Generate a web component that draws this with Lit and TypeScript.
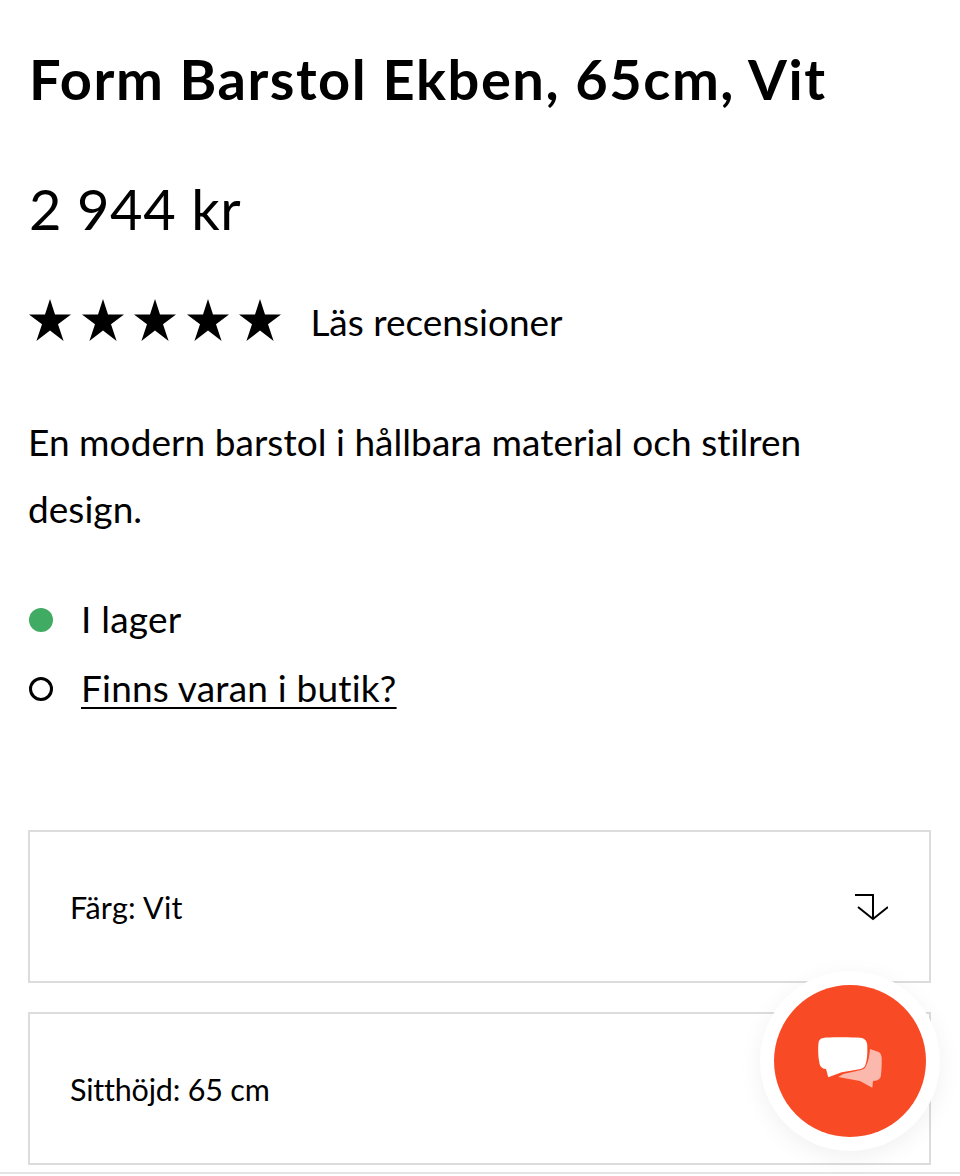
import { LitElement, html, css, svg } from 'lit';
import { customElement } from 'lit/decorators.js';

const STAR = svg`<polygon points="21,0 26,15.6 42,15.6 29,25.2 34.6,42 21,31.6 7.4,42 13,25.2 0,15.6 16,15.6"></polygon>`;

@customElement('app-root')
export class AppRoot extends LitElement {
  static override styles = css`
    :host {
      display: block;
      position: relative;
      width: 960px;
      height: 1176px;
      overflow: hidden;
      background: #fff;
      color: #000;
      font-family: Lato, 'Open Sans', sans-serif;
      font-variant-ligatures: none;
    }

    .page {
      display: flex;
      flex-direction: column;
      padding: 0 28px;
    }

    h1 {
      margin: 46px 0 0 1px;
      font-size: 56px;
      line-height: 66px;
      font-weight: 700;
      letter-spacing: 1.55px;
      white-space: nowrap;
    }

    .price {
      margin: 64px 0 0 1px;
      font-size: 56px;
      line-height: 66px;
      font-weight: 400;
      letter-spacing: 0.6px;
    }

    .rating {
      display: flex;
      align-items: center;
      gap: 29px;
      margin-top: 53px;
      height: 50px;
      padding-left: 1px;
    }

    .stars {
      display: flex;
      gap: 10.6px;
    }

    .stars svg {
      width: 42px;
      height: 42px;
      display: block;
    }

    .reviews {
      margin-top: 2px;
      font-size: 37px;
    }

    .desc {
      margin: 63px 0 0;
      width: 800px;
      font-size: 37px;
      line-height: 67px;
      letter-spacing: 0.05px;
    }

    .stock {
      display: flex;
      flex-direction: column;
      gap: 23px;
      margin-top: 53px;
      padding-left: 1px;
    }

    .stock-row {
      display: flex;
      align-items: center;
      gap: 28px;
      height: 46px;
      font-size: 37px;
      letter-spacing: 0.2px;
    }

    .dot {
      width: 24px;
      height: 24px;
      margin-top: 4px;
      box-sizing: border-box;
      border-radius: 50%;
    }

    .dot.on {
      background: #3fab63;
    }

    .dot.off {
      border: 3px solid #000;
    }

    .stock-row a {
      color: inherit;
      text-decoration: underline;
      text-underline-offset: 5px;
      text-decoration-thickness: 2px;
    }

    .options {
      display: flex;
      flex-direction: column;
      gap: 29px;
      margin-top: 120px;
    }

    .option {
      display: flex;
      align-items: center;
      justify-content: space-between;
      box-sizing: border-box;
      width: 903px;
      height: 153px;
      padding: 0 41px 0 40px;
      border: 2px solid #dcdcdc;
      font-size: 30.5px;
    }

    .option:first-child span {
      letter-spacing: 0.3px;
    }

    .option:last-child span {
      letter-spacing: -0.2px;
    }

    .option svg {
      width: 34px;
      height: 30px;
      display: block;
    }

    .bottom-line {
      position: absolute;
      left: 0;
      right: 0;
      bottom: 2px;
      height: 2px;
      background: #e4e4e4;
    }

    .fab-ring {
      position: absolute;
      left: 760px;
      top: 971px;
      width: 180px;
      height: 180px;
      border-radius: 50%;
      background: #fff;
      box-shadow: 0 6px 24px rgba(0, 0, 0, 0.06);
      display: flex;
      align-items: center;
      justify-content: center;
    }

    .fab {
      width: 152px;
      height: 152px;
      border-radius: 50%;
      background: #f94a26;
      display: flex;
      align-items: center;
      justify-content: center;
    }

    .fab svg {
      width: 64px;
      height: 54px;
      display: block;
    }
  `;

  override render() {
    return html`
      <div class="page">
        <h1>Form Barstol Ekben, 65cm, Vit</h1>
        <div class="price">2 944 kr</div>
        <div class="rating">
          <div class="stars">
            ${[0, 1, 2, 3, 4].map(
              () => html`<svg viewBox="0 0 42 42">${STAR}</svg>`
            )}
          </div>
          <span class="reviews">Läs recensioner</span>
        </div>
        <p class="desc">En modern barstol i hållbara material och stilren design.</p>
        <div class="stock">
          <div class="stock-row"><span class="dot on"></span><span>I lager</span></div>
          <div class="stock-row"><span class="dot off"></span><a href="#">Finns varan i butik?</a></div>
        </div>
        <div class="options">
          <div class="option">
            <span>Färg: Vit</span>
            <svg viewBox="0 0 34 30" fill="none" stroke="#000" stroke-width="2">
              <path d="M1 3H19V27"></path>
              <path d="M4 15L19 27L34 15"></path>
            </svg>
          </div>
          <div class="option"><span>Sitthöjd: 65 cm</span></div>
        </div>
      </div>
      <div class="bottom-line"></div>
      <div class="fab-ring">
        <div class="fab">
          <svg viewBox="0 0 64 54">
            <path fill="#fbb9ad" d="M52 15L60 17.7C63 19 63.7 22 63.7 25C63.8 32 63.5 38 62.7 43C61 46 58 47 55 47L54.3 53.7L42 47L20.3 43L25.3 40L38.7 37C44 36 47 35 48 32C50 28 51 25 52 15Z"></path>
            <path fill="#fff" d="M8 3.5C18 3 34 3 42 3.7C47 4.3 49.3 7 49.3 12C49.5 20 49.3 26 47 32C45 35 41 35.5 37 36L23.7 38.3L10.3 43.3L8 35C4 35 1.5 32 1.3 28C0 22 0 14 0.5 9C1 5 4 3.7 8 3.5Z"></path>
          </svg>
        </div>
      </div>
    `;
  }
}
